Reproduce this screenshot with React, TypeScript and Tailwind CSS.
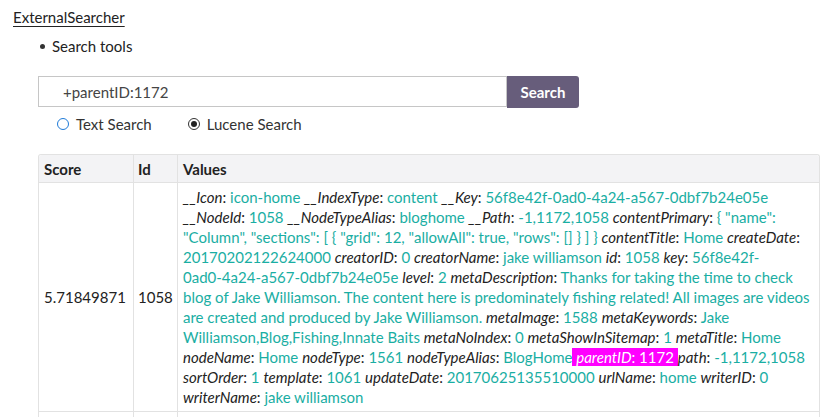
import React from "react";

type Field = { key: string; value: React.ReactNode; hit?: boolean };

const fields: Field[] = [
  { key: "__Icon", value: "icon-home" },
  { key: "__IndexType", value: "content" },
  { key: "__Key", value: "56f8e42f-0ad0-4a24-a567-0dbf7b24e05e" },
  { key: "__NodeId", value: "1058" },
  { key: "__NodeTypeAlias", value: "bloghome" },
  { key: "__Path", value: "-1,1172,1058" },
  {
    key: "contentPrimary",
    value:
      '{ "name": "Column", "sections": [ { "grid": 12, "allowAll": true, "rows": [] } ] }',
  },
  { key: "contentTitle", value: "Home" },
  { key: "createDate", value: "20170202122624000" },
  { key: "creatorID", value: "0" },
  { key: "creatorName", value: "jake williamson" },
  { key: "id", value: "1058" },
  {
    key: "key",
    value: (
      <>
        56f8e42f-
        <wbr />
        <span className="whitespace-nowrap">0ad0-4a24-a567-0dbf7b24e05e</span>
      </>
    ),
  },
  { key: "level", value: "2" },
  {
    key: "metaDescription",
    value:
      "Thanks for taking the time to check blog of Jake Williamson. The content here is predominately fishing related! All images are videos are created and produced by Jake Williamson.",
  },
  { key: "metaImage", value: "1588" },
  { key: "metaKeywords", value: "Jake Williamson,Blog,Fishing,Innate Baits" },
  { key: "metaNoIndex", value: "0" },
  { key: "metaShowInSitemap", value: "1" },
  { key: "metaTitle", value: "Home" },
  { key: "nodeName", value: "Home" },
  { key: "nodeType", value: "1561" },
  { key: "nodeTypeAlias", value: "BlogHome" },
  { key: "parentID", value: "1172", hit: true },
  { key: "path", value: "-1,1172,1058" },
  { key: "sortOrder", value: "1" },
  { key: "template", value: "1061" },
  { key: "updateDate", value: "20170625135510000" },
  { key: "urlName", value: "home" },
  { key: "writerID", value: "0" },
  { key: "writerName", value: "jake williamson" },
];

const Values = ({ items }: { items: Field[] }) => (
  <>
    {items.map((f, i) => {
      const next = items[i + 1];
      if (f.hit) {
        return (
          <span key={f.key} className="bg-[#f0f] text-white">
            {" "}
            <i>{f.key}</i>: {f.value}{" "}
          </span>
        );
      }
      return (
        <React.Fragment key={f.key}>
          <i>{f.key}</i>: <span className="text-[#1aaea3]">{f.value}</span>
          {next && !next.hit ? " " : ""}
        </React.Fragment>
      );
    })}
  </>
);

export default function App() {
  return (
    <div className="min-h-[417px] bg-white text-[15px] leading-5 text-[#222] font-['Lato','Liberation_Sans',sans-serif] pl-[13px] pt-[7px] overflow-hidden">
      <div className="underline underline-offset-[3px]">ExternalSearcher</div>

      <ul className="mt-[9px] ml-[27px]">
        <li className="flex items-center">
          <span className="w-[5px] h-[5px] rounded-full bg-[#333] mr-[7px]" />
          Search tools
        </li>
      </ul>

      <div className="ml-[25px] mt-[20px]">
        <div className="flex">
          <div className="w-[469px] h-[31px] border border-[#c6c6c6] flex items-center pl-[24px] text-[#444]">
            +parentID:1172
          </div>
          <button className="w-[72px] h-[32px] bg-[#675d7b] text-white font-bold rounded-r-[3px]">
            Search
          </button>
        </div>

        <div className="flex items-center mt-[6px] h-[20px] text-[#333]">
          <span className="ml-[19px] w-[12px] h-[12px] rounded-full border border-[#1f7bd8] mr-[7px]" />
          Text Search
          <span className="ml-[36px] w-[12px] h-[12px] rounded-full border border-[#333] flex items-center justify-center mr-[7px]">
            <span className="w-[6px] h-[6px] rounded-full bg-[#222]" />
          </span>
          Lucene Search
        </div>

        <table className="mt-[20px] w-[782px] border-separate border-spacing-0 border border-[#e2e2e2] rounded-t-[3px] border-b-0">
          <thead>
            <tr className="bg-[#f3f3f5] text-left">
              <th className="h-[28px] w-[94px] px-[5px] font-bold border-b border-[#e2e2e2] rounded-tl-[3px]">
                Score
              </th>
              <th className="h-[28px] w-[44px] px-[4px] font-bold border-b border-l border-[#e2e2e2]">
                Id
              </th>
              <th className="h-[28px] px-[5px] font-bold border-b border-l border-[#e2e2e2] rounded-tr-[3px]">
                Values
              </th>
            </tr>
          </thead>
          <tbody>
            <tr>
              <td className="px-[5px] align-middle border-b border-[#e2e2e2]">
                5.71849871
              </td>
              <td className="px-[4px] align-middle border-b border-l border-[#e2e2e2]">
                1058
              </td>
              <td className="pl-[5px] pr-[6px] pt-[4px] pb-[4px] border-b border-l border-[#e2e2e2]">
                <Values items={fields} />
              </td>
            </tr>
            <tr>
              <td className="px-[5px] py-[4px] align-middle">5.71849871</td>
              <td className="px-[4px] py-[4px] align-middle border-l border-[#e2e2e2]">
                1172
              </td>
              <td className="px-[5px] py-[4px] border-l border-[#e2e2e2]">
                <Values items={fields.slice(0, 6)} />
              </td>
            </tr>
          </tbody>
        </table>
      </div>
    </div>
  );
}
